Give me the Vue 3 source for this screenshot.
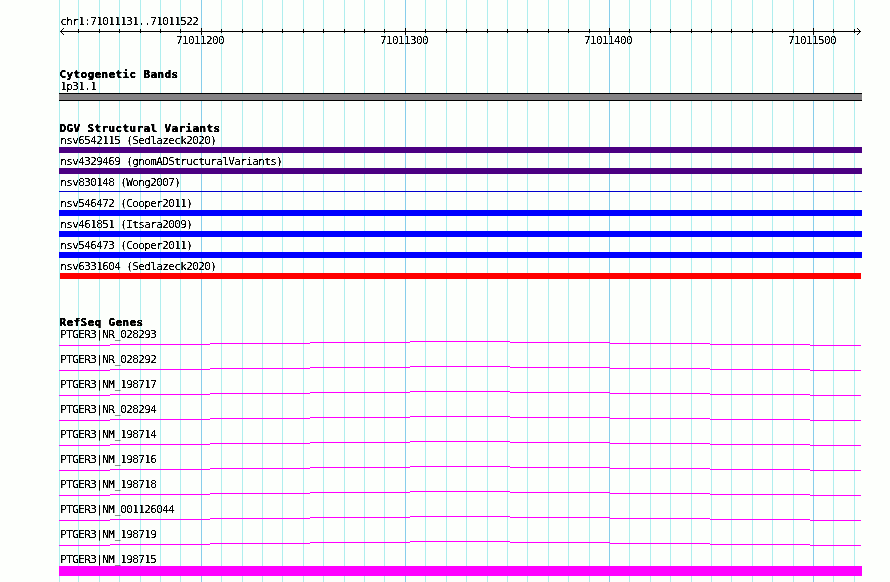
<template>
  <div class="browser-view">
    <svg class="grid-lines" width="890" height="582" shape-rendering="crispEdges" aria-hidden="true">
      <rect
        v-for="x in gridLines"
        :key="x"
        :x="x"
        y="0"
        width="1"
        height="582"
        :class="majorLines.includes(x) ? 'major' : 'minor'"
      />
      <!-- hard-edged glyphs for every label -->
      <filter id="crisp" x="-0.02" y="-0.3" width="1.04" height="1.6" color-interpolation-filters="sRGB">
        <feComponentTransfer>
          <feFuncA type="linear" slope="4" intercept="-1.2" />
        </feComponentTransfer>
      </filter>
    </svg>

    <main class="tracks">
      <header class="ruler">
        <div class="label">chr1:71011131..71011522</div>
        <svg class="axis" width="803" height="7" shape-rendering="crispEdges">
          <rect x="1" y="3" width="801" height="1" />
          <rect v-for="x in ticks" :key="x" :x="x - 59" y="1" width="1" height="4" />
          <rect v-for="x in majorLines" :key="'m' + x" :x="x - 59" y="0" width="1" height="7" />
          <rect v-for="(p, i) in arrowHead" :key="'l' + i" :x="1 + p[0]" :y="p[1]" width="1" height="1" />
          <rect v-for="(p, i) in arrowHead" :key="'r' + i" :x="801 - p[0]" :y="p[1]" width="1" height="1" />
        </svg>
        <div class="positions">
          <span v-for="n in positions" :key="n">{{ n }}</span>
        </div>
      </header>

      <section class="cyto">
        <h2>Cytogenetic Bands</h2>
        <div class="label">1p31.1</div>
        <div class="band"></div>
      </section>

      <section class="variants">
        <h2>DGV Structural Variants</h2>
        <div v-for="v in variants" :key="v.name" class="variant">
          <div class="label">{{ v.name }} ({{ v.study }})</div>
          <div class="bar" :class="v.type"></div>
        </div>
      </section>

      <section class="genes">
        <h2>RefSeq Genes</h2>
        <div v-for="g in genes" :key="g" class="gene">
          <div class="label">PTGER3|{{ g }}</div>
          <svg class="intron" width="803" height="5" shape-rendering="crispEdges">
            <rect v-for="s in intron" :key="s.x" :x="s.x" :y="s.y" :width="s.w" height="1" />
          </svg>
        </div>
        <div class="gene">
          <div class="label">PTGER3|NM_198715</div>
          <div class="exon"></div>
        </div>
      </section>
    </main>
  </div>
</template>

<script setup>
const majorLines = [201, 405, 609, 813]
const gridLines = [
  59, 78, 99, 119, 140, 160, 180, 201, 221, 242, 262, 282, 303, 323,
  344, 364, 384, 405, 425, 446, 466, 487, 507, 527, 548, 568, 589, 609,
  629, 650, 670, 691, 711, 731, 752, 772, 793, 813, 833, 854,
]
const ticks = gridLines.slice(1)
const positions = [71011200, 71011300, 71011400, 71011500]
const arrowHead = [[1, 2], [2, 1], [3, 0], [1, 4], [2, 5], [3, 6]]

const variants = [
  { name: 'nsv6542115', study: 'Sedlazeck2020', type: 'complex' },
  { name: 'nsv4329469', study: 'gnomADStructuralVariants', type: 'complex' },
  { name: 'nsv830148', study: 'Wong2007', type: 'thin' },
  { name: 'nsv546472', study: 'Cooper2011', type: 'gain' },
  { name: 'nsv461851', study: 'Itsara2009', type: 'gain' },
  { name: 'nsv546473', study: 'Cooper2011', type: 'gain' },
  { name: 'nsv6331604', study: 'Sedlazeck2020', type: 'loss' },
]

const genes = [
  'NR_028293', 'NR_028292', 'NM_198717', 'NR_028294', 'NM_198714',
  'NM_198716', 'NM_198718', 'NM_001126044', 'NM_198719',
]

// shallow hat shape, one pixel per step
const intron = [
  { x: 0, y: 4, w: 51 },
  { x: 51, y: 3, w: 100 },
  { x: 151, y: 2, w: 100 },
  { x: 251, y: 1, w: 100 },
  { x: 351, y: 0, w: 100 },
  { x: 451, y: 1, w: 100 },
  { x: 551, y: 2, w: 100 },
  { x: 651, y: 3, w: 100 },
  { x: 751, y: 4, w: 51 },
]
</script>

<style>
body { background: #fdfffc; }
</style>

<style scoped>
.browser-view {
  display: grid;
  width: 890px;
  height: 582px;
  overflow: hidden;
  background: #fdfffc;
  color: #000;
  font-family: "DejaVu Sans Mono", "Liberation Mono", monospace;
}
/* grid lines and tracks share one cell */
.grid-lines, .tracks { grid-area: 1 / 1; }
.grid-lines { display: block; }
.minor { fill: #afeeee; }
.major { fill: #87ceeb; }

.tracks {
  display: flex;
  flex-direction: column;
  width: 803px;
  padding: 16px 0 0 59px;
}
svg { display: block; }

.label, .positions {
  height: 12px;
  line-height: 12px;
  font-size: 11px;
  letter-spacing: -0.622px;
  white-space: pre;
  filter: url(#crisp);
}
.label { padding-left: 1.25px; }
h2 {
  height: 12px;
  margin: 0;
  padding-left: 0.4px;
  line-height: 12px;
  font-size: 11px;
  font-weight: 700;
  letter-spacing: 0.378px;
  white-space: pre;
  -webkit-text-stroke: 0.25px #000;
  filter: url(#crisp);
}

.positions {
  display: flex;
  gap: 156px;
  padding-left: 117px;
}
.positions span { width: 48px; }

.cyto { margin-top: 22px; }
.band {
  height: 6px;
  border-top: 1px solid #000;
  border-bottom: 1px solid #000;
  background: #848284;
}

.variants { margin-top: 22px; }
.variant { height: 21px; }
.bar { height: 6px; }
.complex { background: #4b0082; }
.gain { background: #00f; }
.loss { margin: 0 1px; background: #f00; }
.bar.thin {
  position: relative;
  top: 2px;
  height: 1px;
  background: #0000cd;
}

.genes { margin-top: 35px; }
.gene { height: 25px; }
.intron { fill: #f0f; }
.exon {
  height: 10px;
  background: #f0f;
}
</style>
